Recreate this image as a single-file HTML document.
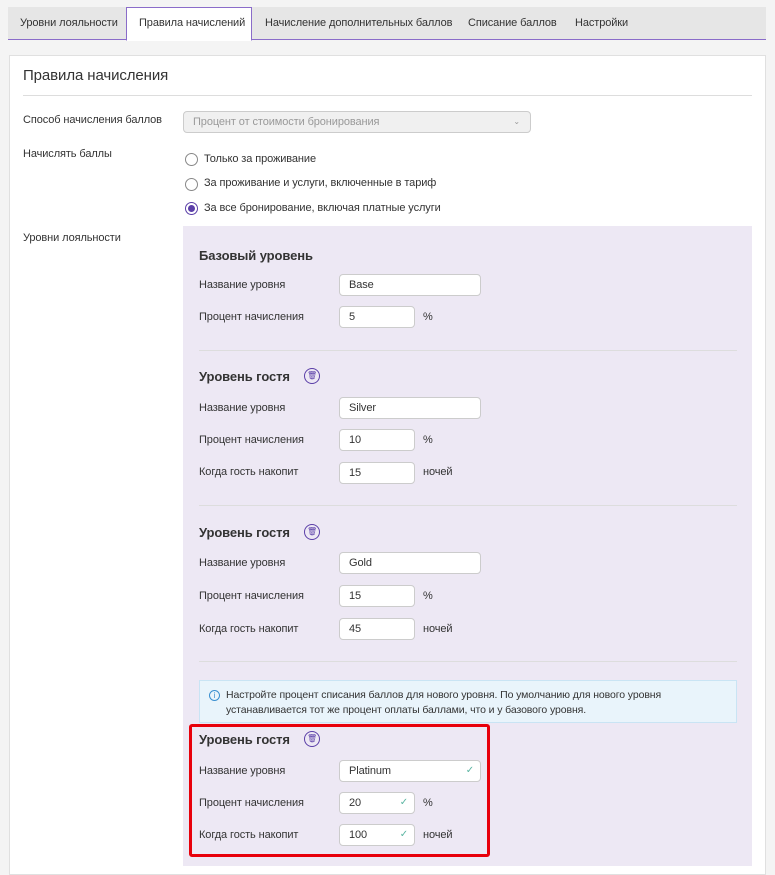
<!DOCTYPE html><html><head><meta charset="utf-8"><style>
*{box-sizing:border-box}body{margin:0;width:775px;height:860px;overflow:hidden;background:#f4f4f4;font-family:"Liberation Sans",sans-serif;font-size:11px;color:#333;letter-spacing:-0.1px}
.a{position:absolute;white-space:nowrap}
.tabs{left:8px;top:7px;width:758px;height:33px;background:#e6e6e6;border-bottom:1px solid #8a6cc9}
.tab{position:absolute;top:0;height:33px;line-height:33px;font-size:11px;color:#333;white-space:nowrap}
.act{background:#fff;border:1px solid #8a6cc9;border-bottom:1px solid #fff;height:34px;padding:0 12px;line-height:31px}
.panel{left:9px;top:55px;width:757px;height:820px;background:#fff;border:1px solid #e0e0e0}
.inp{position:absolute;height:22px;border:1px solid #ccc;border-radius:4px;background:#fff;padding-left:9px;line-height:20px;font-size:11px;white-space:nowrap}
.lbl{position:absolute;left:199px;font-size:11px;white-space:nowrap}
.h{position:absolute;left:199px;font-weight:bold;font-size:13px;color:#333}
.sep{position:absolute;left:199px;width:538px;height:1px;background:#ddd}
.rad{position:absolute;left:185px;width:13px;height:13px;border:1px solid #888;border-radius:50%;background:#fff}
.trash{position:absolute;width:16px;height:16px;border:1.5px solid #5b3fa8;border-radius:50%;font-size:8px;color:#5b3fa8;text-align:center;line-height:13px}
.ck{position:absolute;color:#5bb5a2;font-size:10px}
</style></head><body>
<div class="a tabs"></div>
<div class="tab" style="left:20px;top:7px">Уровни лояльности</div>
<div class="tab act" style="left:126px;top:7px;width:126px">Правила начислений</div>
<div class="tab" style="left:265px;top:7px">Начисление дополнительных баллов</div>
<div class="tab" style="left:468px;top:7px">Списание баллов</div>
<div class="tab" style="left:575px;top:7px">Настройки</div>
<div class="a panel"></div>
<div class="a" style="left:23px;top:67px;font-size:15px;color:#333">Правила начисления</div>
<div class="a" style="left:23px;top:95px;width:729px;height:1px;background:#ddd"></div>
<div class="a" style="left:23px;top:114px">Способ начисления баллов</div>
<div class="inp" style="left:183px;top:111px;width:348px;background:#f0f0f0;color:#999">Процент от стоимости бронирования<span style="position:absolute;right:10px;font-size:8px">⌄</span></div>
<div class="a" style="left:23px;top:148px">Начислять баллы</div>
<div class="rad" style="top:153px"></div><div class="a" style="left:204px;top:153px">Только за проживание</div>
<div class="rad" style="top:178px"></div><div class="a" style="left:204px;top:177px">За проживание и услуги, включенные в тариф</div>
<div class="rad" style="top:202px;border-color:#5b3fa8"><div style="margin:2px;width:7px;height:7px;border-radius:50%;background:#5b3fa8"></div></div><div class="a" style="left:204px;top:202px">За все бронирование, включая платные услуги</div>
<div class="a" style="left:23px;top:232px">Уровни лояльности</div>
<div class="a" style="left:183px;top:226px;width:569px;height:640px;background:#ede8f4"></div>

<div class="h" style="top:248px">Базовый уровень</div>
<div class="lbl" style="top:279px">Название уровня</div><div class="inp" style="left:339px;top:274px;width:142px">Base</div>
<div class="lbl" style="top:311px">Процент начисления</div><div class="inp" style="left:339px;top:306px;width:76px">5</div><div class="lbl" style="left:423px;top:311px">%</div>
<div class="sep" style="top:350px"></div>

<div class="h" style="top:369px">Уровень гостя</div><div class="trash" style="left:304px;top:368px">🗑</div>
<div class="lbl" style="top:402px">Название уровня</div><div class="inp" style="left:339px;top:397px;width:142px">Silver</div>
<div class="lbl" style="top:434px">Процент начисления</div><div class="inp" style="left:339px;top:429px;width:76px">10</div><div class="lbl" style="left:423px;top:434px">%</div>
<div class="lbl" style="top:466px">Когда гость накопит</div><div class="inp" style="left:339px;top:462px;width:76px">15</div><div class="lbl" style="left:423px;top:466px">ночей</div>
<div class="sep" style="top:505px"></div>

<div class="h" style="top:525px">Уровень гостя</div><div class="trash" style="left:304px;top:524px">🗑</div>
<div class="lbl" style="top:557px">Название уровня</div><div class="inp" style="left:339px;top:552px;width:142px">Gold</div>
<div class="lbl" style="top:590px">Процент начисления</div><div class="inp" style="left:339px;top:585px;width:76px">15</div><div class="lbl" style="left:423px;top:590px">%</div>
<div class="lbl" style="top:623px">Когда гость накопит</div><div class="inp" style="left:339px;top:618px;width:76px">45</div><div class="lbl" style="left:423px;top:623px">ночей</div>
<div class="sep" style="top:661px"></div>

<div class="a" style="left:199px;top:680px;width:538px;height:43px;background:#e9f4fb;border:1px solid #c9e4f4;padding:7px 10px 0 26px;font-size:10.5px;line-height:15px;white-space:normal">Настройте процент списания баллов для нового уровня. По умолчанию для нового уровня устанавливается тот же процент оплаты баллами, что и у базового уровня.<div style="position:absolute;left:9px;top:9px;width:11px;height:11px;border:1px solid #3a8fd0;border-radius:50%;color:#3a8fd0;font-size:8px;line-height:9px;text-align:center">i</div></div>

<div class="h" style="top:732px">Уровень гостя</div><div class="trash" style="left:304px;top:731px">🗑</div>
<div class="lbl" style="top:765px">Название уровня</div><div class="inp" style="left:339px;top:760px;width:142px">Platinum<span class="ck" style="right:6px;top:0">✓</span></div>
<div class="lbl" style="top:797px">Процент начисления</div><div class="inp" style="left:339px;top:792px;width:76px">20<span class="ck" style="right:6px;top:0">✓</span></div><div class="lbl" style="left:423px;top:797px">%</div>
<div class="lbl" style="top:829px">Когда гость накопит</div><div class="inp" style="left:339px;top:824px;width:76px">100<span class="ck" style="right:6px;top:0">✓</span></div><div class="lbl" style="left:423px;top:829px">ночей</div>
<div class="a" style="left:189px;top:724px;width:301px;height:133px;border:3px solid #e8000b;border-radius:3px"></div>
</body></html>
